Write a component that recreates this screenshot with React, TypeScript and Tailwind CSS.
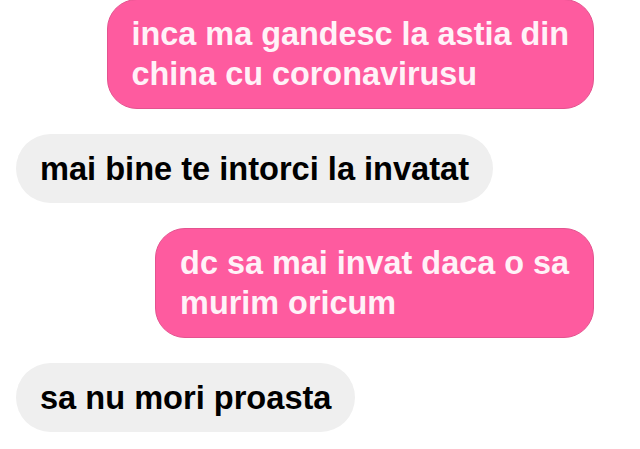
import React from "react";

type Msg = {
  mine: boolean;
  lines: string[];
};

const messages: Msg[] = [
  { mine: true, lines: ["inca ma gandesc la astia din", "china cu coronavirusu"] },
  { mine: false, lines: ["mai bine te intorci la invatat"] },
  { mine: true, lines: ["dc sa mai invat daca o sa", "murim oricum"] },
  { mine: false, lines: ["sa nu mori proasta"] },
];

function Bubble({ msg }: { msg: Msg }) {
  if (msg.mine) {
    return (
      <div className="self-end rounded-[30px] border border-[#e4538f] bg-[#fe5b9f] px-6 py-[14px] text-[32.4px] font-bold leading-[40px] text-[#fff2f8]">
        {msg.lines.map((l) => (
          <div key={l} className="whitespace-nowrap">
            {l}
          </div>
        ))}
      </div>
    );
  }
  return (
    <div className="self-start rounded-full bg-[#efefef] px-6 py-[14px] text-[32.6px] font-bold leading-[41px] text-black">
      {msg.lines.map((l) => (
        <div key={l} className="whitespace-nowrap">
          {l}
        </div>
      ))}
    </div>
  );
}

export default function App() {
  return (
    <div
      className="flex h-[449px] w-[640px] flex-col gap-[25px] overflow-hidden bg-white pl-4 pr-[46px] [&>*:first-child]:-mt-[1px]"
      style={{ fontFamily: '"Liberation Sans", Arial, sans-serif' }}
    >
      {messages.map((m, i) => (
        <Bubble key={i} msg={m} />
      ))}
    </div>
  );
}
